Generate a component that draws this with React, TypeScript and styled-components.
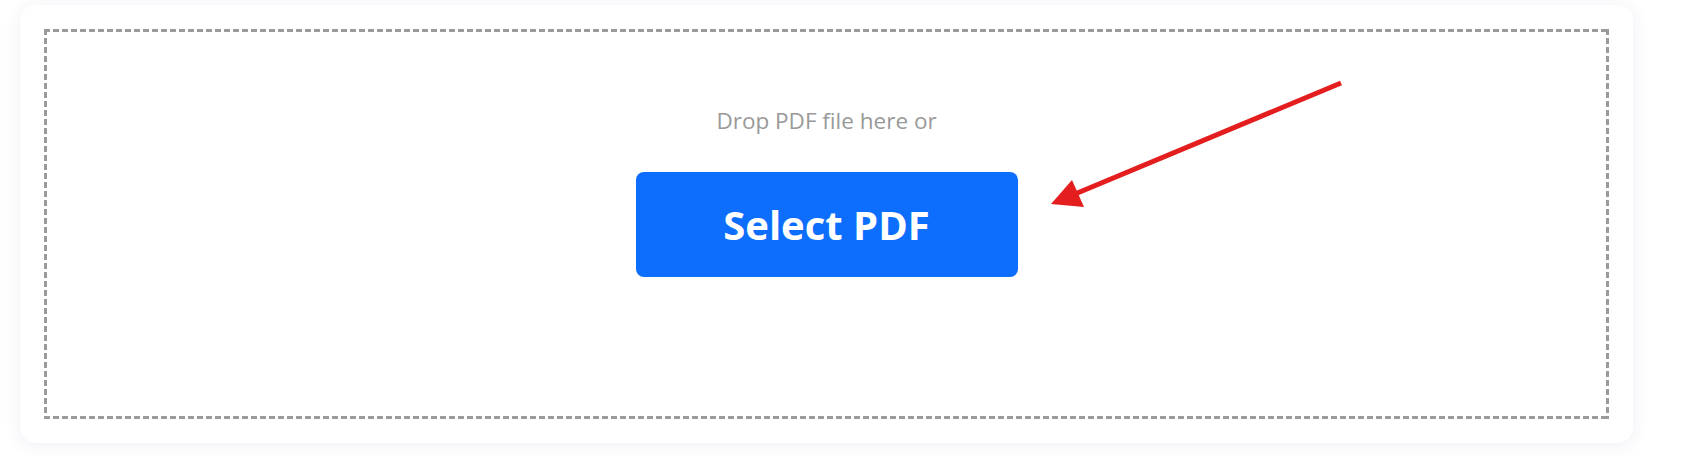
import React from "react";
import styled, { createGlobalStyle } from "styled-components";

const GlobalStyle = createGlobalStyle`
  html, body {
    margin: 0;
    padding: 0;
    background: #ffffff;
  }
  body {
    font-family: "Open Sans", "Noto Sans", "Liberation Sans", sans-serif;
  }
`;

const Page = styled.div`
  padding: 5px 50px 15px 20px;
`;

const Card = styled.div`
  position: relative;
  background: #ffffff;
  border-radius: 16px;
  padding: 24px;
  box-shadow: 0 2px 18px rgba(40, 50, 110, 0.08);
`;

// dashed frame drawn with gradients so the dash rhythm matches (6px dash, 3px gap)
const DropZone = styled.div`
  box-sizing: border-box;
  height: 390px;
  display: flex;
  flex-direction: column;
  align-items: center;
  padding-top: 77px;
  background-image:
    linear-gradient(to right, #9a9a9a 6px, transparent 6px),
    linear-gradient(to right, #9a9a9a 6px, transparent 6px),
    linear-gradient(to bottom, #9a9a9a 6px, transparent 6px),
    linear-gradient(to bottom, #9a9a9a 6px, transparent 6px);
  background-size: 9px 3px, 9px 3px, 3px 9px, 3px 9px;
  background-position: left top, left bottom, left top, right top;
  background-repeat: repeat-x, repeat-x, repeat-y, repeat-y;
`;

const Hint = styled.p`
  margin: 0;
  font-size: 22.5px;
  line-height: 30px;
  color: #999999;
`;

const SelectButton = styled.button`
  margin-top: 36px;
  width: 382px;
  height: 105px;
  border: none;
  border-radius: 8px;
  background: #0d6efd;
  color: #ffffff;
  font-family: inherit;
  font-size: 40px;
  font-weight: 700;
  cursor: pointer;
`;

const Annotation = styled.svg`
  position: absolute;
  left: 0;
  top: 0;
  pointer-events: none;
  overflow: visible;
`;

export default function App() {
  return (
    <>
      <GlobalStyle />
      <Page>
        <Card>
          <DropZone>
            <Hint>Drop PDF file here or</Hint>
            <SelectButton type="button">Select PDF</SelectButton>
          </DropZone>
          <Annotation width="1613" height="437" viewBox="20 5 1613 437">
            <line x1="1341" y1="83" x2="1075" y2="194" stroke="#e41e1e" strokeWidth="5" />
            <polygon points="1051,204 1072,180 1084,207" fill="#e41e1e" />
          </Annotation>
        </Card>
      </Page>
    </>
  );
}
